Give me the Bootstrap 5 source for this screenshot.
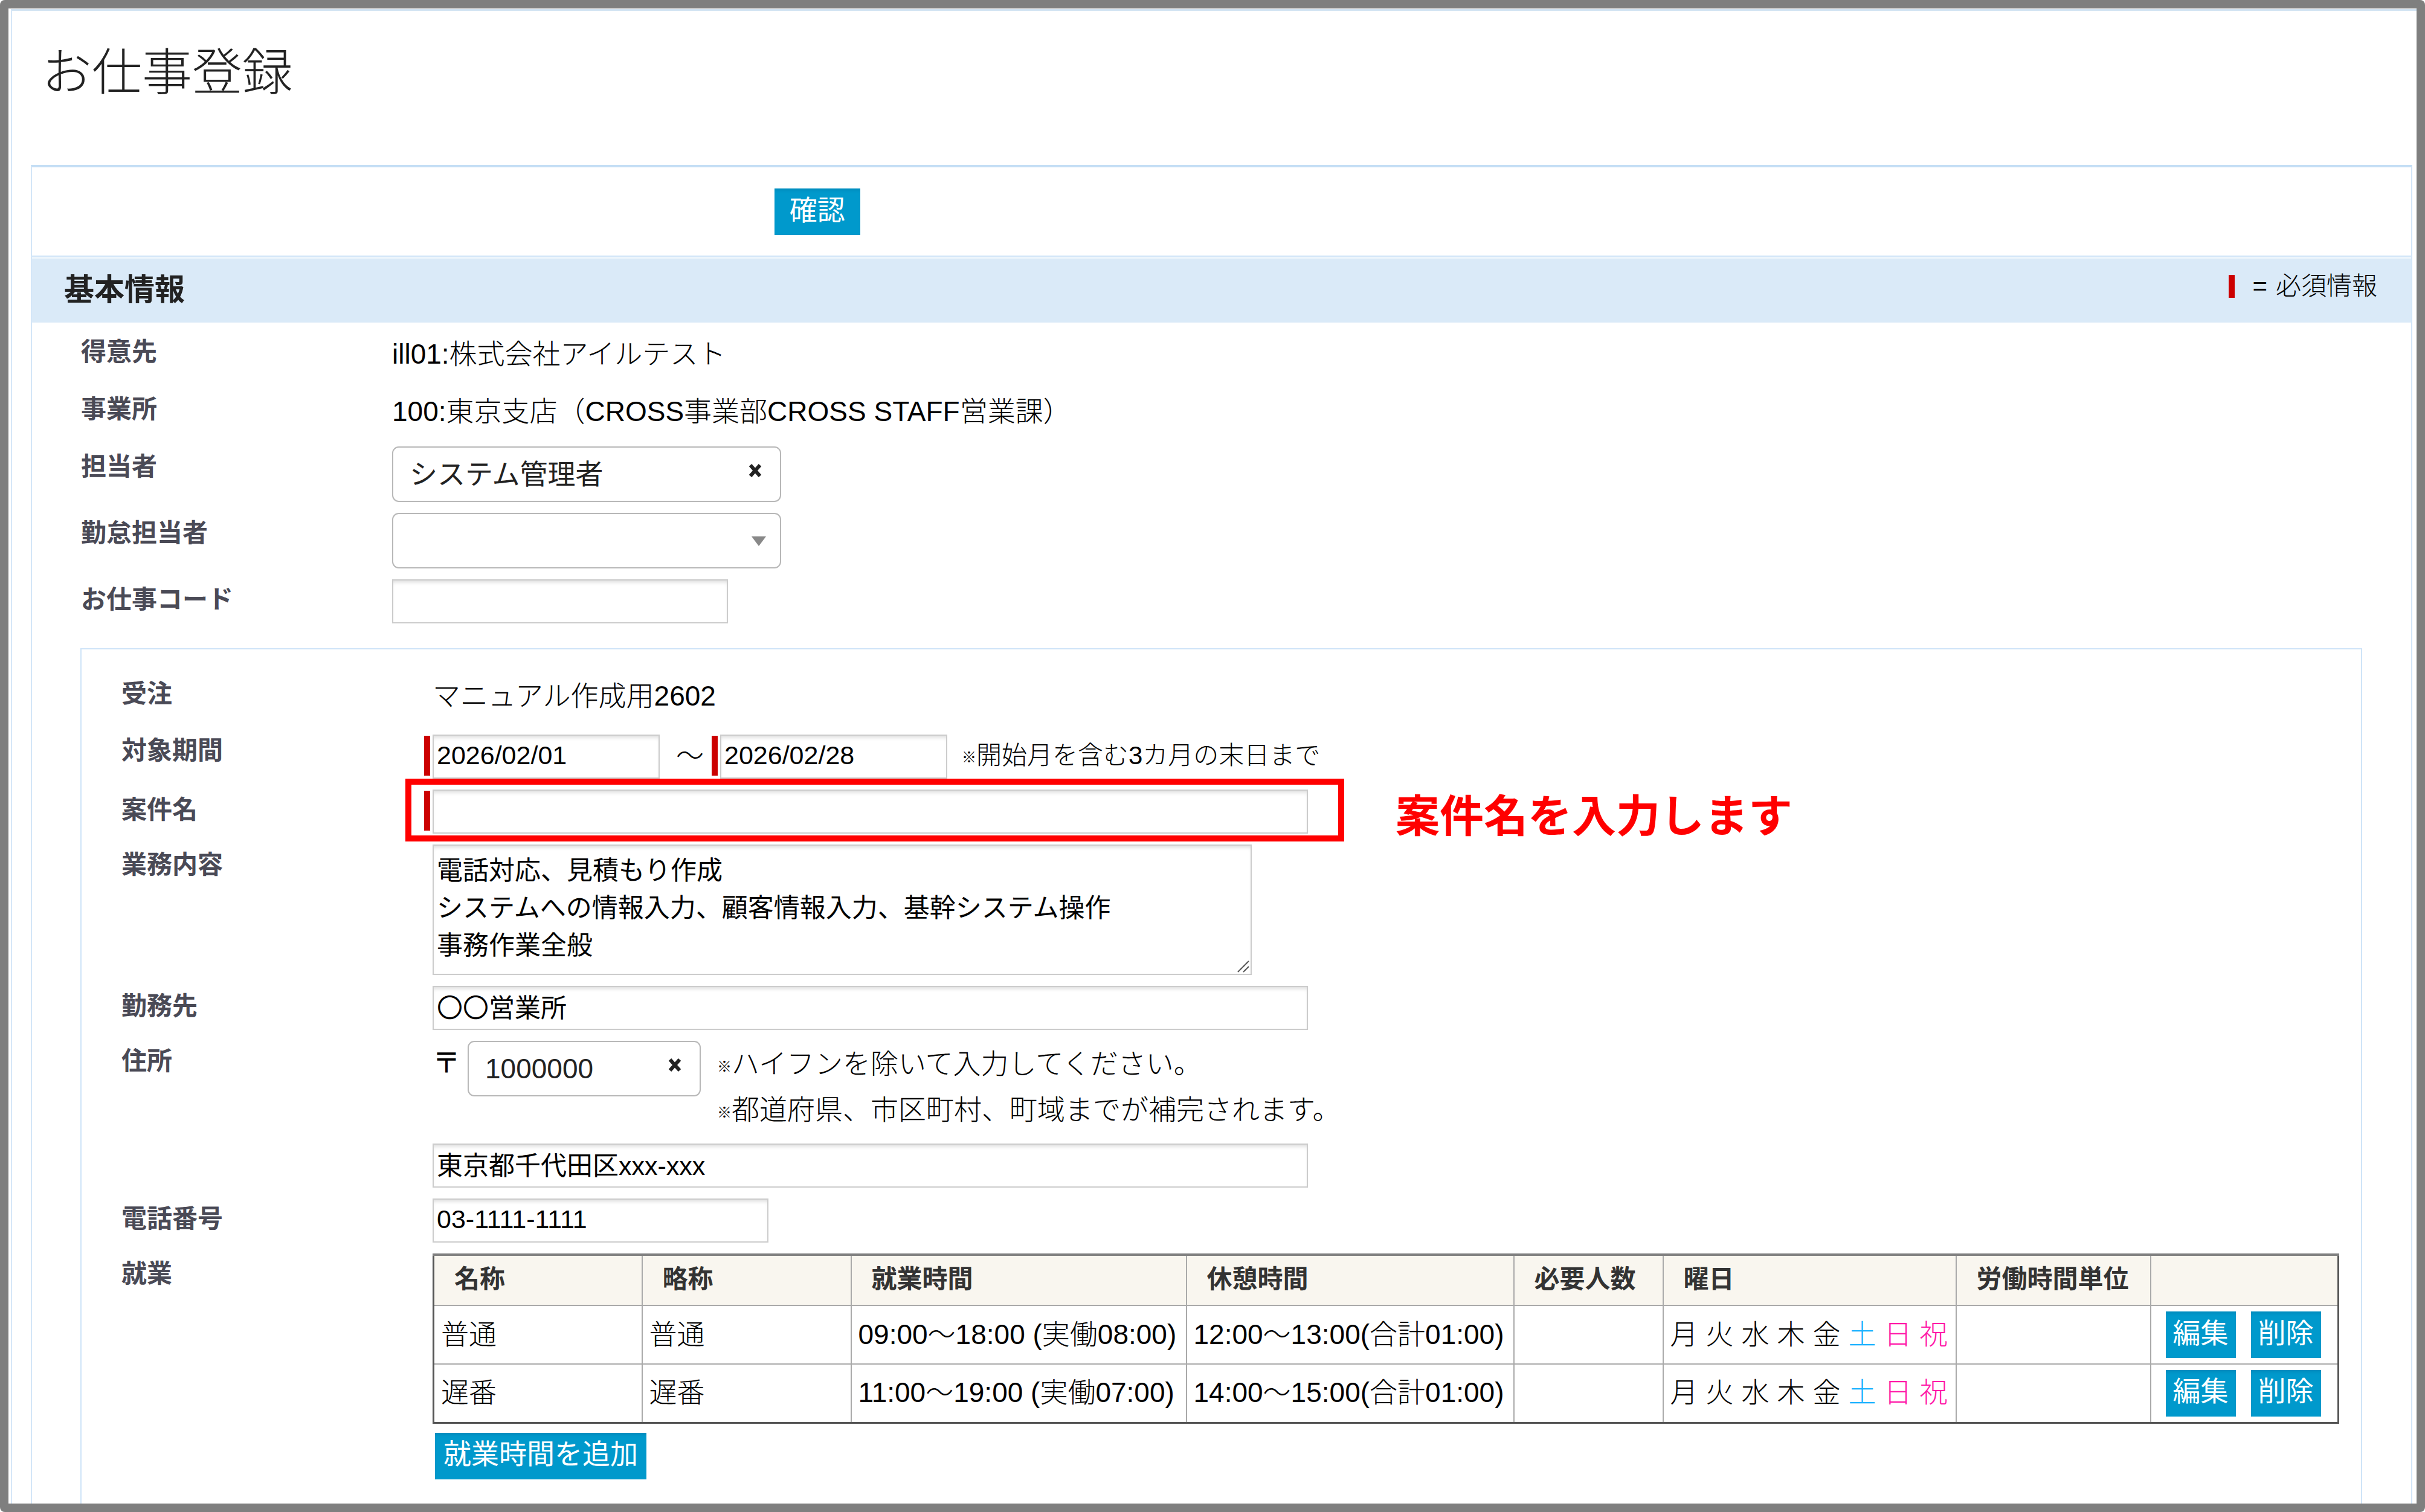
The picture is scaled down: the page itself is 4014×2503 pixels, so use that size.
<!DOCTYPE html>
<html lang="ja">
<head>
<meta charset="utf-8">
<meta name="viewport" content="width=device-width, initial-scale=1">
<title>お仕事登録</title>
<link rel="stylesheet" href="https://cdn.jsdelivr.net/npm/bootstrap@5.3.0/dist/css/bootstrap.min.css">
<style>
  body {
    font-family: "Liberation Sans", "Noto Sans CJK JP", sans-serif;
    font-size: 46px;
    font-weight: 300;
    line-height: 74px;
    color: #000;
    background: #fff;
  }
  .page-frame { min-height: 100vh; border: 14px solid #7f7f7f; border-radius: 8px; }
  .page-sheet { margin: 1px 0 0 4px; border-top: 3px solid #d3e4f3; border-left: 2px solid #d6e7f8; }
  .page-title {
    font-family: "Noto Sans CJK JP", sans-serif;
    font-size: 83px; font-weight: 300; line-height: 120px; color: #222;
    margin: 0; padding: 35px 0 100px 49px;
  }
  .edit-panel { margin: 0 7px 0 31px; border: 2px solid #d3e6f8; border-top: 4px solid #c4def5; border-bottom: 0; }
  .action-bar { padding: 35px 0 34px 31.2%; }
  .section-bar { background: #daeaf8; border-top: 3px solid #d3e6f8; box-shadow: inset 0 2px #f4f9fd; height: 111px; padding: 0 56px 0 53px; }
  .section-bar h2 { font-size: 50px; font-weight: 700; line-height: 74px; color: #222; margin: 0; }
  .legend-note { font-size: 42px; gap: 14px; line-height: 74px; margin-top: -12px; }
  .legend-note b { margin-left: 15px; }
  .req-bar { width: 10px; background: #c00; flex: none; }
  .legend-note .req-bar { height: 38px; }
  .panel-body { padding: 0 81px 0 80px; }
  .form-line { padding: 15px 0 3px; }
  .form-line > .line-label { width: 516px; flex: none; padding-left: 1px; font-size: 42px; font-weight: 700; line-height: 68px; color: #4a4a56; }
  .line-value { min-height: 77px; flex: 1 1 0; min-width: 0; }
  .sub-panel { border: 2px solid #cfe4f8; border-bottom: 0; margin-top: 34px; padding: 25px 36px 0 65px; }
  .sub-panel .line-value { min-height: 72px; }
  .sub-panel .first-line .line-value { min-height: 76px; }
  .text-box {
    height: 73px; border: 2px solid #ccc; border-radius: 0; padding: 0 5px 4px; background: #fff;
    font-size: 43px; font-weight: 400; line-height: 62px; color: #000;
    box-shadow: inset 0 6px 6px -3px #ddd;
  }
  .text-ja { padding-bottom: 8px; }
  .area-box { display: block; height: 216px; padding-top: 10px; resize: none; overflow: hidden; }
  .w-code { width: 556px; }
  .w-date { width: 376px; }
  .w-long { width: 1449px; }
  .w-area { width: 1356px; }
  .pick { position: relative; width: 644px; }
  .pick-zip { width: 386px; }
  .pick select {
    appearance: none; width: 100%; height: 92px; border: 2px solid #b8b8b8; border-radius: 11px;
    background: #fff; padding: 0 27px; font-size: 46px; font-weight: 400; line-height: 60px; color: #222;
  }
  .pick .wipe, .pick .caret { position: absolute; line-height: 0; border: 0; padding: 0; background: none; }
  .pick .wipe { right: 31px; top: 28px; }
  .pick .caret { right: 25px; top: 39px; }
  .grip { position: absolute; right: 4px; bottom: 4px; pointer-events: none; }
  .date-row { padding-top: 7px; line-height: 70px; }
  .tilde { padding: 0 27px; }
  .need { margin-left: -14px; gap: 4px; width: fit-content; position: relative; }
  .need .req-bar { height: 66px; margin-top: 2px; }
  .hint { font-size: 42px; }
  .hint-kome { font-size: 24px; line-height: 1; vertical-align: 3px; }
  .zip-hints { font-size: 46px; line-height: 76px; margin-left: 27px; }
  .zip-mark { width: 58px; font-size: 46px; font-weight: 400; line-height: 72px; }
  .callout-box { position: absolute; inset: -18px -60px -13px -31px; border: 10px solid #f00; pointer-events: none; }
  .callout-text {
    position: absolute; left: calc(100% + 145px); top: 0; white-space: nowrap;
    font-size: 73px; font-weight: 700; line-height: 90px; color: #f00;
  }
  .act-btn {
    border: 0; border-radius: 0; background: #09c; color: #fff; height: 77px; padding: 0 12px 6px;
    font-size: 46px; font-weight: 400; line-height: 70px; box-shadow: inset 0 6px 4px -2px #008ebf;
  }
  .act-btn:hover { background: #008ebf; color: #fff; }
  .act-wide { padding: 0 25px 6px; }
  .shift-table { width: 100%; table-layout: fixed; border-collapse: collapse; border: 3px solid #555; border-top: 4px solid #808080; white-space: nowrap; }
  .shift-table th { height: 84px; font-size: 42px; font-weight: 700; line-height: 62px; color: #333; background: #f9f6ef; padding: 0 0 4px 33px; border: 2px solid #aaa; }
  .shift-table td { height: 97px; padding: 0 0 2px 11px; border: 2px solid #aaa; line-height: 74px; }
  .shift-table td.acts { padding: 0 0 0 24px; }
  .day-list { gap: 13px; }
  .sat { color: #1ab2ff; }
  .sun { color: #ff1aa8; }
  .acts .d-flex { gap: 25px; }
  .add-btn { margin: 15px 0 0 4px; padding: 0 14px 6px; }
</style>
<script defer src="https://cdn.jsdelivr.net/npm/bootstrap@5.3.0/dist/js/bootstrap.bundle.min.js"></script>
</head>
<body>
<div class="page-frame d-flex flex-column">
  <form class="page-sheet flex-grow-1 d-flex flex-column">
    <h1 class="page-title">お仕事登録</h1>
    <main class="edit-panel flex-grow-1 d-flex flex-column">
      <div class="action-bar d-flex"><button type="button" class="btn act-btn act-wide">確認</button></div>
      <div class="section-bar d-flex justify-content-between align-items-center">
        <h2>基本情報</h2>
        <div class="legend-note d-flex align-items-center"><span class="req-bar"></span><b>=</b><span>必須情報</span></div>
      </div>
      <div class="panel-body flex-grow-1 d-flex flex-column">
        <div class="form-line d-flex"><span class="line-label">得意先</span><div class="line-value">ill01:株式会社アイルテスト</div></div>
        <div class="form-line d-flex"><span class="line-label">事業所</span><div class="line-value">100:東京支店（CROSS事業部CROSS STAFF営業課）</div></div>
        <div class="form-line d-flex">
          <label class="line-label" for="owner">担当者</label>
          <div class="line-value"><div class="pick">
            <select id="owner"><option>システム管理者</option></select>
            <button type="button" class="wipe" aria-label="クリア"><svg width="24" height="24" viewBox="0 0 24 24"><path d="M4 3L20 21M20 3L4 21" stroke="#222" stroke-width="6"/></svg></button>
          </div></div>
        </div>
        <div class="form-line d-flex">
          <label class="line-label" for="attend">勤怠担当者</label>
          <div class="line-value"><div class="pick">
            <select id="attend"><option></option></select>
            <svg class="caret" width="24" height="16" viewBox="0 0 24 16"><path d="M0 0H24L12 16Z" fill="#888"/></svg>
          </div></div>
        </div>
        <div class="form-line d-flex">
          <label class="line-label" for="code">お仕事コード</label>
          <div class="line-value d-flex align-items-start"><input id="code" type="text" class="text-box w-code"></div>
        </div>

        <section class="sub-panel flex-grow-1">
          <div class="form-line first-line d-flex"><span class="line-label">受注</span><div class="line-value">マニュアル作成用2602</div></div>
          <div class="form-line d-flex">
            <label class="line-label" for="from">対象期間</label>
            <div class="line-value date-row d-flex">
              <div class="need d-flex"><span class="req-bar"></span><input id="from" type="text" class="text-box w-date" value="2026/02/01"></div>
              <span class="tilde">～</span>
              <div class="need d-flex"><span class="req-bar"></span><input type="text" class="text-box w-date" value="2026/02/28" aria-label="終了日"></div>
              <span class="hint ps-4"><span class="hint-kome">※</span>開始月を含む3カ月の末日まで</span>
            </div>
          </div>
          <div class="form-line d-flex">
            <label class="line-label" for="subject">案件名</label>
            <div class="line-value">
              <div class="need d-flex"><span class="req-bar"></span><input id="subject" type="text" class="text-box w-long">
                <div class="callout-box"></div><div class="callout-text">案件名を入力します</div>
              </div>
            </div>
          </div>
          <div class="form-line d-flex">
            <label class="line-label" for="detail">業務内容</label>
            <div class="line-value"><div class="position-relative w-area">
              <textarea id="detail" class="text-box area-box w-100">電話対応、見積もり作成
システムへの情報入力、顧客情報入力、基幹システム操作
事務作業全般</textarea>
              <svg class="grip" width="20" height="20" viewBox="0 0 20 20"><path d="M1 19L19 1M10 19L19 10" stroke="#555" stroke-width="2"/></svg>
            </div></div>
          </div>
          <div class="form-line d-flex">
            <label class="line-label" for="place">勤務先</label>
            <div class="line-value d-flex"><input id="place" type="text" class="text-box text-ja w-long" value="〇〇営業所"></div>
          </div>
          <div class="form-line d-flex">
            <label class="line-label" for="zip">住所</label>
            <div class="line-value d-flex">
              <span class="zip-mark">〒</span>
              <div class="pick pick-zip">
                <select id="zip"><option>1000000</option></select>
                <button type="button" class="wipe" aria-label="クリア"><svg width="24" height="24" viewBox="0 0 24 24"><path d="M4 3L20 21M20 3L4 21" stroke="#222" stroke-width="6"/></svg></button>
              </div>
              <div class="zip-hints"><div><span class="hint-kome">※</span>ハイフンを除いて入力してください。</div><div><span class="hint-kome">※</span>都道府県、市区町村、町域までが補完されます。</div></div>
            </div>
          </div>
          <div class="form-line d-flex">
            <span class="line-label"></span>
            <div class="line-value d-flex"><input type="text" class="text-box text-ja w-long" value="東京都千代田区xxx-xxx" aria-label="住所詳細"></div>
          </div>
          <div class="form-line d-flex">
            <label class="line-label" for="tel">電話番号</label>
            <div class="line-value d-flex"><input id="tel" type="text" class="text-box w-code" value="03-1111-1111"></div>
          </div>
          <div class="form-line d-flex">
            <span class="line-label">就業</span>
            <div class="line-value">
              <table class="shift-table">
                <colgroup><col style="width:345px"><col style="width:346px"><col style="width:555px"><col style="width:542px"><col style="width:247px"><col style="width:485px"><col style="width:322px"><col></colgroup>
                <thead><tr><th>名称</th><th>略称</th><th>就業時間</th><th>休憩時間</th><th>必要人数</th><th>曜日</th><th>労働時間単位</th><th></th></tr></thead>
                <tbody>
                  <tr><td>普通</td><td>普通</td><td>09:00～18:00 (実働08:00)</td><td>12:00～13:00(合計01:00)</td><td></td>
                    <td><div class="day-list d-flex"><span>月</span><span>火</span><span>水</span><span>木</span><span>金</span><span class="sat">土</span><span class="sun">日</span><span class="sun">祝</span></div></td><td></td>
                    <td class="acts"><div class="d-flex"><button type="button" class="btn act-btn">編集</button><button type="button" class="btn act-btn">削除</button></div></td></tr>
                  <tr><td>遅番</td><td>遅番</td><td>11:00～19:00 (実働07:00)</td><td>14:00～15:00(合計01:00)</td><td></td>
                    <td><div class="day-list d-flex"><span>月</span><span>火</span><span>水</span><span>木</span><span>金</span><span class="sat">土</span><span class="sun">日</span><span class="sun">祝</span></div></td><td></td>
                    <td class="acts"><div class="d-flex"><button type="button" class="btn act-btn">編集</button><button type="button" class="btn act-btn">削除</button></div></td></tr>
                </tbody>
              </table>
              <div class="d-flex"><button type="button" class="btn act-btn add-btn">就業時間を追加</button></div>
            </div>
          </div>
        </section>
      </div>
    </main>
  </form>
</div>
</body>
</html>
